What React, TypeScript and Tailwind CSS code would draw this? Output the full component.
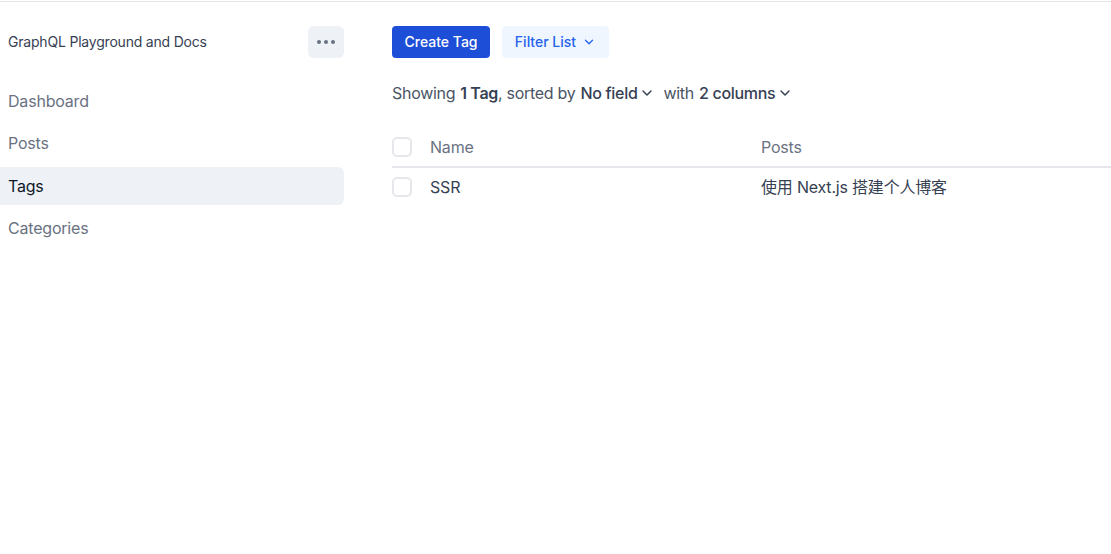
import React from 'react';

const Chevron: React.FC<{ className?: string }> = ({ className }) => (
  <svg viewBox="0 0 20 20" fill="none" stroke="currentColor" strokeWidth={1.8} strokeLinecap="round" strokeLinejoin="round" className={className}>
    <path d="M5 7.5l5 5 5-5" />
  </svg>
);

const Checkbox: React.FC = () => (
  <span className="block w-5 h-5 rounded-[5px] border-2 border-[#e5e7eb] bg-white shrink-0" />
);

const navItems = ['Dashboard', 'Posts', 'Tags', 'Categories'];

const App: React.FC = () => {
  return (
    <div className="min-h-screen bg-white pt-px tracking-[-0.2px]" style={{ fontFamily: `Inter, 'Noto Sans CJK SC', sans-serif` }}>
      <div className="border-t border-[#e5e5e5] flex">
        {/* Sidebar */}
        <aside className="w-[344px] shrink-0 pt-6">
          <div className="flex items-center justify-between pl-2 h-8">
            <span className="text-sm text-gray-700">GraphQL Playground and Docs</span>
            <button className="w-9 h-8 rounded-md bg-[#eef1f5] flex items-center justify-center gap-[3px]">
              <span className="w-[4px] h-[4px] rounded-full bg-gray-500" />
              <span className="w-[4px] h-[4px] rounded-full bg-gray-500" />
              <span className="w-[4px] h-[4px] rounded-full bg-gray-500" />
            </button>
          </div>
          <nav className="mt-6 flex flex-col gap-[4.3px]">
            {navItems.map((item) => (
              <div
                key={item}
                className={
                  item === 'Tags'
                    ? 'h-[38px] flex items-center pl-2 rounded-r-md bg-[#eef2f6] text-gray-900'
                    : 'h-[38px] flex items-center pl-2 text-gray-500'
                }
              >
                {item}
              </div>
            ))}
          </nav>
        </aside>

        {/* Main */}
        <main className="flex-1 ml-12 pt-6">
          <div className="flex items-center gap-3 tracking-normal">
            <button className="h-8 w-[98px] rounded bg-[#1d4ed8] text-white text-sm font-medium">Create Tag</button>
            <button className="h-8 w-[107px] rounded bg-[#eff6ff] text-[#2563eb] text-sm font-medium flex items-center justify-center gap-[6px]">
              Filter List
              <Chevron className="w-[14px] h-[14px]" />
            </button>
          </div>

          <div className="mt-[23px] flex items-center text-gray-600 leading-6 tracking-[-0.3px]">
            <span>Showing</span>
            <span className="ml-[5px] font-semibold text-gray-700">1 Tag</span>
            <span>, sorted by</span>
            <span className="ml-[5px] font-medium text-gray-700">No field</span>
            <Chevron className="ml-[2px] w-4 h-4 text-gray-700" />
            <span className="ml-2">with</span>
            <span className="ml-[5px] font-medium text-gray-700">2 columns</span>
            <Chevron className="ml-[2px] w-4 h-4 text-gray-700" />
          </div>

          <div className="mt-[23px]">
            <div className="h-[40px] flex items-center border-b-2 border-[#e5e7eb] text-gray-500">
              <Checkbox />
              <span className="ml-[18px] w-[331px]">Name</span>
              <span>Posts</span>
            </div>
            <div className="h-[38px] flex items-center text-gray-700">
              <Checkbox />
              <span className="ml-[18px] w-[331px]">SSR</span>
              <span>使用 Next.js 搭建个人博客</span>
            </div>
          </div>
        </main>
      </div>
    </div>
  );
};

export default App;
